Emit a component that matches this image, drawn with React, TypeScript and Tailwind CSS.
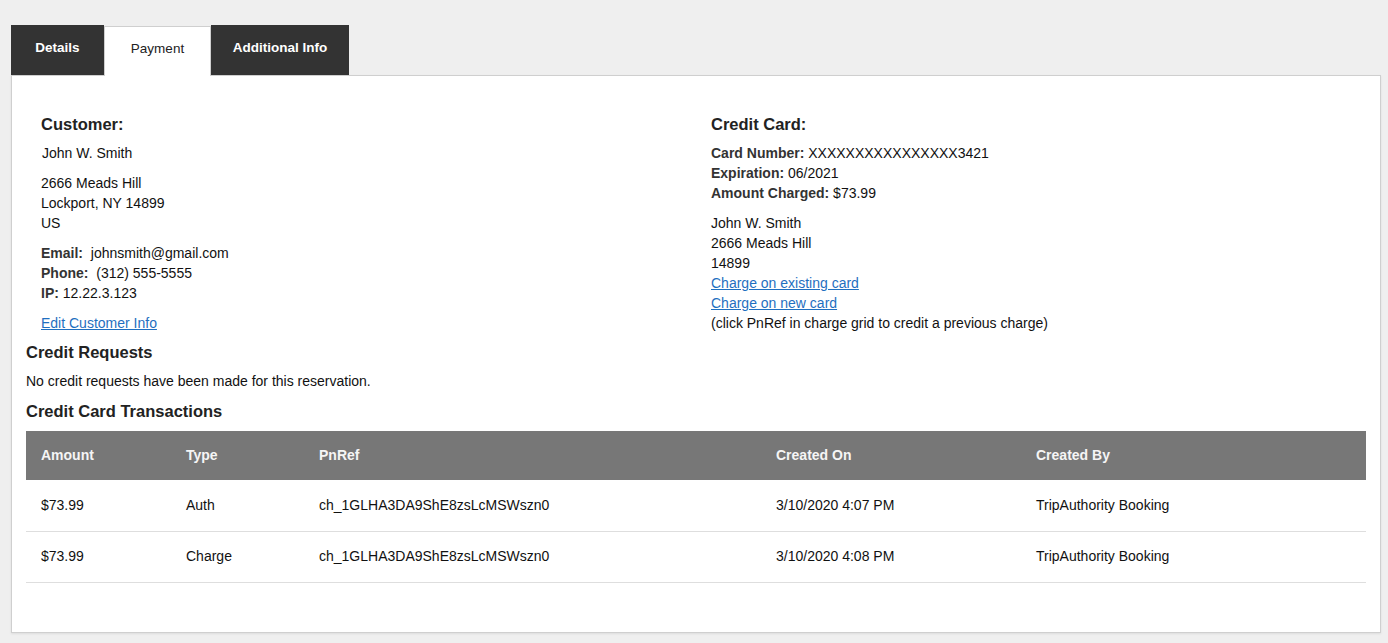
const rows = [
  { amount: "$73.99", type: "Auth", pnref: "ch_1GLHA3DA9ShE8zsLcMSWszn0", on: "3/10/2020 4:07 PM", by: "TripAuthority Booking" },
  { amount: "$73.99", type: "Charge", pnref: "ch_1GLHA3DA9ShE8zsLcMSWszn0", on: "3/10/2020 4:08 PM", by: "TripAuthority Booking" },
];

function Tab({ label, active, width }: { label: string; active?: boolean; width: string }) {
  return active ? (
    <div className={`${width} h-[50px] pb-[4px] flex items-center justify-center bg-white border-t border-x border-[#cfcfcf] text-[13.5px] text-[#222] relative top-px`}>
      {label}
    </div>
  ) : (
    <div className={`${width} h-[50px] pb-[3px] flex items-center justify-center bg-[#333] text-white font-bold text-[13.5px] whitespace-nowrap`}>
      {label}
    </div>
  );
}

export default function App() {
  return (
    <div
      className="min-h-[643px] bg-[#efefef] pt-[25px] pl-[11px] text-[#111]"
      style={{ fontFamily: '"Liberation Sans", Arial, sans-serif' }}
    >
      <div className="flex items-end">
        <Tab label="Details" width="w-[93px]" />
        <Tab label="Payment" width="w-[107px]" active />
        <Tab label="Additional Info" width="w-[138px]" />
      </div>

      <div className="w-[1370px] h-[558px] bg-white border border-[#cfcfcf] pt-[38px] px-[14px] shadow-[0_1px_2px_rgba(0,0,0,0.08)]">
        <div className="grid grid-cols-[685px_1fr] text-[14px] leading-[20px]">
          {/* customer */}
          <div className="pl-[15px]">
            <h2 className="text-[16.5px] font-bold text-[#222] mb-[9px]">Customer:</h2>
            <div className="pl-px">John W. Smith</div>
            <div className="mt-[10px]">
              <div>2666 Meads Hill</div>
              <div>Lockport, NY 14899</div>
              <div>US</div>
            </div>
            <div className="mt-[10px]">
              <div><span className="font-bold text-[#333]">Email:</span>&nbsp; johnsmith@gmail.com</div>
              <div><span className="font-bold text-[#333]">Phone:</span>&nbsp; (312) 555-5555</div>
              <div><span className="font-bold text-[#333]">IP:</span> 12.22.3.123</div>
            </div>
            <a href="#" className="block mt-[10px] text-[#1f6fc0] underline w-fit">Edit Customer Info</a>
          </div>

          {/* credit card */}
          <div>
            <h2 className="text-[16.5px] font-bold text-[#222] mb-[9px]">Credit Card:</h2>
            <div><span className="font-bold text-[#333]">Card Number:</span> XXXXXXXXXXXXXXXX3421</div>
            <div><span className="font-bold text-[#333]">Expiration:</span> 06/2021</div>
            <div><span className="font-bold text-[#333]">Amount Charged:</span> $73.99</div>
            <div className="mt-[10px]">
              <div>John W. Smith</div>
              <div>2666 Meads Hill</div>
              <div>14899</div>
              <a href="#" className="block text-[#1f6fc0] underline w-fit">Charge on existing card</a>
              <a href="#" className="block text-[#1f6fc0] underline w-fit">Charge on new card</a>
              <div>(click PnRef in charge grid to credit a previous charge)</div>
            </div>
          </div>
        </div>

        <h2 className="mt-[9px] text-[16.5px] leading-[20px] font-bold text-[#222]">Credit Requests</h2>
        <p className="mt-[9px] text-[14px] leading-[20px]">No credit requests have been made for this reservation.</p>
        <h2 className="mt-[10px] text-[16.5px] leading-[20px] font-bold text-[#222]">Credit Card Transactions</h2>

        <table className="mt-[10px] w-[1340px] table-fixed border-collapse text-[14px] text-left">
          <colgroup>
            <col className="w-[160px]" />
            <col className="w-[133px]" />
            <col className="w-[457px]" />
            <col className="w-[260px]" />
            <col />
          </colgroup>
          <thead>
            <tr className="bg-[#777] text-[#f5f5f5] h-[49px]">
              <th className="pl-[15px] font-bold">Amount</th>
              <th className="font-bold">Type</th>
              <th className="font-bold">PnRef</th>
              <th className="font-bold">Created On</th>
              <th className="font-bold">Created By</th>
            </tr>
          </thead>
          <tbody>
            {rows.map((r) => (
              <tr key={r.type} className="h-[51px] border-b border-[#dedede]">
                <td className="pl-[15px]">{r.amount}</td>
                <td>{r.type}</td>
                <td>{r.pnref}</td>
                <td>{r.on}</td>
                <td>{r.by}</td>
              </tr>
            ))}
          </tbody>
        </table>
      </div>
    </div>
  );
}
